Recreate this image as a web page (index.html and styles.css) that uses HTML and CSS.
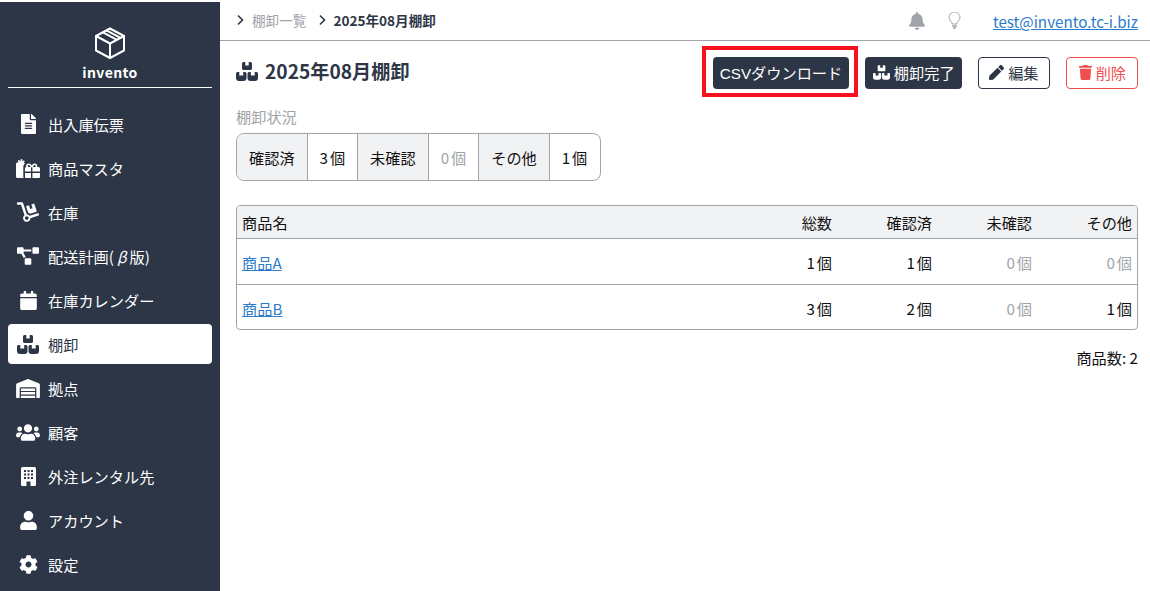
FILE: index.html
```html
<!DOCTYPE html>
<html lang="ja">
<head>
<meta charset="utf-8">
<title>invento</title>
<link rel="stylesheet" href="styles.css">
</head>
<body>
<svg class="defs" aria-hidden="true">
  <symbol id="i-boxes" viewBox="0 0 22 19"><path d="M7.500 0H9.300V3.500H12.700V0H14.500A1.500 1.500 0 0 1 16 1.500V6.500A1.500 1.500 0 0 1 14.500 8H7.500A1.500 1.500 0 0 1 6 6.500V1.500A1.500 1.500 0 0 1 7.500 0Z"/><path d="M1.500 10H3.300V13.500H7.200V10H9A1.500 1.500 0 0 1 10.500 11.500V16A3 3 0 0 1 7.500 19H3A3 3 0 0 1 0 16V11.500A1.500 1.500 0 0 1 1.500 10Z"/><path d="M13 10H14.800V13.500H18.700V10H20.500A1.500 1.500 0 0 1 22 11.500V16A3 3 0 0 1 19 19H14.500A3 3 0 0 1 11.500 16V11.500A1.500 1.500 0 0 1 13 10Z"/></symbol>
</svg>
<div class="app">
  <aside class="side">
    <div class="brand">
      <svg class="logo" viewBox="0 0 32 32" fill="none" stroke="currentColor" stroke-width="2" stroke-linejoin="round" stroke-linecap="round"><path d="M16 1.500 30 9v14.500L16 31 2 23.500V9z"/><path d="M2 9l14 7.500L30 9M16 16.500V31M9 5.300l14 7.500M12.500 3.400l14 7.500"/></svg>
      <div class="brand-name">invento</div>
    </div>
    <nav class="nav">
      <a class="item"><span class="ico"><svg width="15" height="20" viewBox="0 0 384 512"><path d="M224 136V0H24C10.700 0 0 10.700 0 24v464c0 13.300 10.700 24 24 24h336c13.300 0 24-10.700 24-24V160H248c-13.200 0-24-10.800-24-24zm64 236c0 6.600-5.400 12-12 12H108c-6.600 0-12-5.400-12-12v-8c0-6.600 5.400-12 12-12h168c6.600 0 12 5.400 12 12v8zm0-64c0 6.600-5.400 12-12 12H108c-6.600 0-12-5.400-12-12v-8c0-6.600 5.400-12 12-12h168c6.600 0 12 5.400 12 12v8zm0-72v8c0 6.600-5.400 12-12 12H108c-6.600 0-12-5.400-12-12v-8c0-6.600 5.400-12 12-12h168c6.600 0 12 5.400 12 12zm96-114.100v6.100H256V0h6.100c6.400 0 12.500 2.500 17 7l97.900 98c4.500 4.500 7 10.600 7 16.900z"/></svg></span>出入庫伝票</a>
      <a class="item"><span class="ico"><svg width="24" height="20" viewBox="0 0 24 20" fill-rule="evenodd"><path d="M2.500 4.500 1.700 2.500l1.600-.6.900 1.800.7-2.700 1.700.4-.4 2.100 1.700-1.200.9 1.300-1.500 1.200h.5c.6 0 1 .3 1.200.8-1.100.9-1.700 2.100-1.700 3.400V18c0 .7.100 1.400.4 2H1.200C.5 20 0 19.500 0 18.800V6c0-.8.600-1.500 1.400-1.500z"/><path d="M12.800 5.500c1.200 0 2.100.7 2.900 2.100C16.500 6.200 17.400 5.500 18.600 5.500c1.500 0 2.700 1.200 2.700 2.500 0 .4-.1.800-.3 1.100h1.300c.9 0 1.700.7 1.700 1.500v3H16.400V9.300h-1.400v4.300H8.900v-3c0-.8.800-1.500 1.700-1.500h-.3c-.2-.3-.3-.7-.3-1.100 0-1.300 1.200-2.500 2.800-2.500zm0 1.600c-.6 0-1.100.4-1.100.9 0 .6.500 1 1.100 1h1.700c-.7-1.400-1.100-1.900-1.700-1.900zm5.800 0c-.6 0-1 .5-1.700 1.900h1.700c.6 0 1.100-.4 1.100-1 0-.5-.5-.9-1.100-.9z"/><path d="M9 15h6v5h-4.700C9.600 20 9 19.400 9 18.700zM16.400 15H24v3.700c0 .7-.6 1.300-1.300 1.300h-6.300z"/></svg></span>商品マスタ</a>
      <a class="item"><span class="ico"><svg width="22" height="20" viewBox="0 0 576 512"><path d="M294.200 277.700c18 5 34.700 13.400 49.500 24.700l161.500-53.800c8.400-2.800 12.900-11.900 10.100-20.200L454.900 47.200c-2.800-8.400-11.900-12.900-20.200-10.100l-61.100 20.400 33.100 99.400L346 177l-33.100-99.400-61.600 20.500c-8.400 2.800-12.900 11.900-10.100 20.200l53 159.400zm281 48.700L565 296c-2.800-8.400-11.900-12.900-20.200-10.100l-213.500 71.200c-17.200-22-43.600-36.400-73.500-37L158.400 21.900C154 8.800 141.800 0 128 0H16C7.200 0 0 7.200 0 16v32c0 8.800 7.200 16 16 16h88.900l92.200 276.700c-26.100 20.400-41.700 53.600-36 90.500 6.100 39.400 37.900 72.300 77.300 79.200 60.200 10.700 112.300-34.800 113.400-92.600l213.300-71.200c8.300-2.800 12.900-11.800 10.100-20.200zM256 464c-26.500 0-48-21.500-48-48s21.500-48 48-48 48 21.500 48 48-21.500 48-48 48z"/></svg></span>在庫</a>
      <a class="item"><span class="ico"><svg width="22" height="18" viewBox="0 0 640 512"><path d="M384 320H256c-17.670 0-32 14.330-32 32v128c0 17.670 14.330 32 32 32h128c17.670 0 32-14.330 32-32V352c0-17.670-14.330-32-32-32zM192 32c0-17.670-14.330-32-32-32H32C14.330 0 0 14.330 0 32v128c0 17.670 14.330 32 32 32h95.720l73.160 128.040C211.980 300.980 232.400 288 256 288h.28L192 175.510V128h224V64H192V32zM608 0H480c-17.670 0-32 14.330-32 32v128c0 17.670 14.330 32 32 32h128c17.670 0 32-14.330 32-32V32c0-17.670-14.330-32-32-32z"/></svg></span>配送計画(<i class="beta">β</i>版)</a>
      <a class="item"><span class="ico"><svg width="17" height="19" viewBox="0 0 448 512"><path d="M12 192h424c6.600 0 12 5.400 12 12v260c0 26.500-21.500 48-48 48H48c-26.500 0-48-21.500-48-48V204c0-6.600 5.400-12 12-12zm436-44v-36c0-26.500-21.500-48-48-48h-48V12c0-6.600-5.400-12-12-12h-40c-6.600 0-12 5.400-12 12v52H160V12c0-6.600-5.400-12-12-12h-40c-6.600 0-12 5.400-12 12v52H48C21.500 64 0 85.500 0 112v36c0 6.600 5.400 12 12 12h424c6.600 0 12-5.400 12-12z"/></svg></span>在庫カレンダー</a>
      <a class="item active"><span class="ico"><svg width="22" height="19"><use href="#i-boxes"/></svg></span>棚卸</a>
      <a class="item"><span class="ico"><svg width="24" height="19" viewBox="0 0 640 512"><path d="M504 352H136.400c-4.400 0-8 3.600-8 8l-.1 48c0 4.400 3.600 8 8 8H504c4.400 0 8-3.600 8-8v-48c0-4.400-3.600-8-8-8zm0 96H136.100c-4.400 0-8 3.600-8 8l-.1 48c0 4.400 3.600 8 8 8h368c4.400 0 8-3.600 8-8v-48c0-4.400-3.600-8-8-8zm0-192H136.600c-4.400 0-8 3.600-8 8l-.1 48c0 4.400 3.600 8 8 8H504c4.400 0 8-3.600 8-8v-48c0-4.400-3.600-8-8-8zm106.500-139L338.400 3.700a48.150 48.150 0 0 0-36.900 0L29.500 117C11.700 124.500 0 141.900 0 161.300V504c0 4.400 3.600 8 8 8h80c4.400 0 8-3.600 8-8V256c0-17.600 14.600-32 32.600-32h382.800c18 0 32.600 14.400 32.600 32v248c0 4.400 3.600 8 8 8h80c4.400 0 8-3.600 8-8V161.300c0-19.400-11.700-36.800-29.500-44.300z"/></svg></span>拠点</a>
      <a class="item"><span class="ico"><svg width="24" height="19" viewBox="0 0 640 512"><path d="M96 224c35.300 0 64-28.700 64-64s-28.700-64-64-64-64 28.700-64 64 28.700 64 64 64zm448 0c35.300 0 64-28.700 64-64s-28.700-64-64-64-64 28.700-64 64 28.700 64 64 64zm32 32h-64c-17.600 0-33.500 7.100-45.100 18.600 40.300 22.100 68.900 62 75.100 109.400h66c17.700 0 32-14.300 32-32v-32c0-35.300-28.700-64-64-64zm-256 0c61.900 0 112-50.100 112-112S381.900 32 320 32 208 82.100 208 144s50.100 112 112 112zm76.800 32h-8.300c-20.800 10-43.900 16-68.500 16s-47.600-6-68.500-16h-8.300C179.600 288 128 339.600 128 403.200V432c0 26.500 21.500 48 48 48h288c26.500 0 48-21.500 48-48v-28.800c0-63.600-51.600-115.200-115.200-115.200zm-223.700-13.400C161.500 263.100 145.600 256 128 256H64c-35.300 0-64 28.700-64 64v32c0 17.700 14.300 32 32 32h65.900c6.300-47.400 34.900-87.300 75.200-109.400z"/></svg></span>顧客</a>
      <a class="item"><span class="ico"><svg width="15" height="19" viewBox="0 0 15 19" fill-rule="evenodd"><path d="M1.500 0h12A1.500 1.500 0 0 1 15 1.500V17.500A1.500 1.500 0 0 1 13.500 19H9.500v-4.500h-4V19H1.500A1.500 1.500 0 0 1 0 17.500V1.500A1.500 1.500 0 0 1 1.500 0zM3 3v2h2V3zM6.500 3v2h2V3zM10 3v2h2V3zM3 6.500v2h2v-2zM6.500 6.500v2h2v-2zM10 6.500v2h2v-2zM3 10v2h2v-2zM6.500 10v2h2v-2zM10 10v2h2v-2z"/></svg></span>外注レンタル先</a>
      <a class="item"><span class="ico"><svg width="17" height="19" viewBox="0 0 448 512"><path d="M224 256c70.700 0 128-57.300 128-128S294.700 0 224 0 96 57.300 96 128s57.300 128 128 128zm89.600 32h-16.700c-22.200 10.200-46.900 16-72.900 16s-50.600-5.800-72.900-16h-16.700C60.200 288 0 348.200 0 422.400V464c0 26.500 21.500 48 48 48h352c26.500 0 48-21.500 48-48v-41.600c0-74.200-60.200-134.400-134.400-134.400z"/></svg></span>アカウント</a>
      <a class="item"><span class="ico"><svg width="19" height="19" viewBox="0 0 512 512"><path d="M487.400 315.700l-42.600-24.600c4.300-23.200 4.300-47 0-70.200l42.600-24.600c4.900-2.800 7.100-8.600 5.500-14-11.100-35.600-30-67.800-54.700-94.600-3.800-4.100-10-5.100-14.800-2.300L380.800 110c-17.900-15.400-38.500-27.300-60.800-35.100V25.800c0-5.600-3.900-10.500-9.400-11.700-36.700-8.200-74.300-7.800-109.200 0-5.500 1.200-9.400 6.100-9.400 11.700V75c-22.200 7.900-42.800 19.800-60.800 35.100L88.700 85.500c-4.900-2.800-11-1.900-14.800 2.300-24.700 26.700-43.600 58.900-54.700 94.600-1.700 5.400.6 11.200 5.500 14L67.300 221c-4.300 23.200-4.300 47 0 70.200l-42.600 24.600c-4.900 2.800-7.100 8.600-5.500 14 11.100 35.600 30 67.800 54.700 94.600 3.800 4.100 10 5.100 14.800 2.300l42.600-24.600c17.900 15.400 38.500 27.300 60.800 35.100v49.200c0 5.600 3.900 10.500 9.400 11.700 36.700 8.200 74.300 7.800 109.200 0 5.500-1.200 9.400-6.100 9.400-11.700v-49.200c22.200-7.900 42.800-19.800 60.800-35.100l42.600 24.600c4.900 2.800 11 1.900 14.800-2.300 24.700-26.700 43.600-58.900 54.700-94.600 1.500-5.500-.7-11.300-5.600-14.100zM256 336c-44.100 0-80-35.900-80-80s35.900-80 80-80 80 35.900 80 80-35.900 80-80 80z"/></svg></span>設定</a>
    </nav>
  </aside>
  <main class="main">
    <header class="topbar">
      <div class="crumbs">
        <svg class="chev" viewBox="0 0 8 12" fill="none" stroke="currentColor" stroke-width="1.600"><path d="M2 1.500 6.500 6 2 10.500"/></svg>
        <span class="crumb-link">棚卸一覧</span>
        <svg class="chev chev-2" viewBox="0 0 8 12" fill="none" stroke="currentColor" stroke-width="1.600"><path d="M2 1.500 6.500 6 2 10.500"/></svg>
        <span class="crumb-now">2025年08月棚卸</span>
      </div>
      <div class="top-right">
        <svg class="bell" viewBox="0 0 448 512"><path d="M224 512c35.320 0 63.970-28.650 63.970-64H160.030c0 35.350 28.650 64 63.970 64zm215.390-149.710c-19.320-20.760-55.470-51.990-55.470-154.290 0-77.700-54.480-139.900-127.940-155.160V32c0-17.670-14.320-32-31.980-32s-31.980 14.330-31.980 32v20.840C118.560 68.100 64.080 130.300 64.080 208c0 102.300-36.150 133.530-55.470 154.290-6 6.450-8.660 14.160-8.610 21.710.11 16.400 12.980 32 32.100 32h383.800c19.120 0 32-15.600 32.100-32 .05-7.550-2.610-15.270-8.610-21.710z"/></svg>
        <svg class="bulb" viewBox="0 0 13 17" fill="none" stroke="currentColor" stroke-width="1"><path d="M4.300 12C4.300 10 1 8.500 1 5.500a5.500 5.500 0 0 1 11 0C12 8.500 8.700 10 8.700 12z"/><path d="M4.500 14h4M5.500 16h2" stroke-width="1.500" stroke-linecap="round"/></svg>
        <a class="user">test@invento.tc-i.biz</a>
      </div>
    </header>
    <div class="content">
      <div class="head">
        <h1 class="title"><svg class="title-ico"><use href="#i-boxes"/></svg>2025年08月棚卸</h1>
        <div class="actions">
          <button class="btn dark marked">CSVダウンロード</button>
          <button class="btn dark"><svg class="btn-ico"><use href="#i-boxes"/></svg>棚卸完了</button>
          <button class="btn outline"><svg class="btn-ico pen" viewBox="0 0 512 512"><path d="M290.740 93.240l128.020 128.020-277.990 277.990-114.140 12.600C11.350 513.540-1.560 500.620.14 485.340l12.700-114.220 277.900-277.880zm207.200-19.060l-60.110-60.110c-18.750-18.750-49.160-18.750-67.910 0l-56.550 56.550 128.020 128.020 56.550-56.550c18.750-18.760 18.750-49.160 0-67.910z"/></svg>編集</button>
          <button class="btn danger"><svg class="btn-ico trash" viewBox="0 0 448 512"><path d="M432 32H312l-9.400-18.700A24 24 0 0 0 281.100 0H166.800a23.720 23.720 0 0 0-21.400 13.300L136 32H16A16 16 0 0 0 0 48v32a16 16 0 0 0 16 16h416a16 16 0 0 0 16-16V48a16 16 0 0 0-16-16zM53.200 467a48 48 0 0 0 47.900 45h245.800a48 48 0 0 0 47.900-45L416 128H32z"/></svg>削除</button>
        </div>
      </div>
      <div class="status-label">棚卸状況</div>
      <div class="status">
        <span class="s-key">確認済</span><span class="s-val">3 個</span>
        <span class="s-key">未確認</span><span class="s-val muted">0 個</span>
        <span class="s-key">その他</span><span class="s-val">1 個</span>
      </div>
      <div class="table-wrap">
        <table class="table">
          <thead>
            <tr><th class="name">商品名</th><th>総数</th><th>確認済</th><th>未確認</th><th>その他</th></tr>
          </thead>
          <tbody>
            <tr><td class="name"><a>商品A</a></td><td>1 個</td><td>1 個</td><td class="muted">0 個</td><td class="muted">0 個</td></tr>
            <tr><td class="name"><a>商品B</a></td><td>3 個</td><td>2 個</td><td class="muted">0 個</td><td>1 個</td></tr>
          </tbody>
        </table>
      </div>
      <div class="count">商品数: 2</div>
    </div>
  </main>
</div>
</body>
</html>
```
FILE: styles.css
```css
* { box-sizing: border-box; }
html, body { margin: 0; height: 100%; overflow: hidden; }
body {
  font-family: "Noto Sans CJK JP", "Noto Sans", sans-serif;
  font-size: 15.2px;
  color: #111;
  background: #fff;
}
.defs { display: none; }
.app { display: flex; height: 591px; padding-top: 2px; }
.side {
  width: 220px;
  flex: none;
  background: #2d3646;
  color: #fff;
  padding: 0 8px;
}
.brand {
  height: 86px;
  border-bottom: 1px solid #fff;
  display: flex;
  flex-direction: column;
  align-items: center;
  padding-top: 25px;
}
.logo { width: 32px; height: 32px; display: block; }
.brand-name { font-weight: 700; font-size: 14px; line-height: 20px; margin-top: 3px; letter-spacing: .4px; }
.nav { display: flex; flex-direction: column; gap: 4px; margin-top: 16px; }
.item {
  height: 40px;
  display: flex;
  align-items: center;
  border-radius: 4px;
  color: #fff;
}
.item.active { background: #fff; color: #2d3646; }
.ico { width: 40px; display: flex; justify-content: center; align-items: center; flex: none; }
.ico svg { fill: currentColor; display: block; }
.beta { font-style: italic; margin: 0 3px; }
.main { flex: 1; min-width: 0; display: flex; flex-direction: column; margin-top: -2px; }
.topbar {
  height: 41px;
  border-bottom: 1px solid #a0a3a8;
  display: flex;
  justify-content: space-between;
  align-items: center;
  padding: 2px 12px 0 16px;
}
.crumbs { display: flex; align-items: center; font-size: 13.6px; margin-top: -2px; }
.chev { width: 8px; height: 12px; color: #2d3646; margin-right: 8px; }
.chev-2 { margin-left: 12px; margin-right: 7px; }
.crumb-link { color: #a0a3a8; }
.crumb-now { font-weight: 700; color: #2d3646; }
.top-right { display: flex; align-items: center; }
.bell { width: 16px; height: 18px; fill: #a0a3a8; }
.bulb { width: 13px; height: 17px; color: #a0a3a8; margin-left: 23px; margin-top: -2px; }
.user { margin-left: 32px; color: #2b7bc9; text-decoration: underline; }
.content { padding: 16px 12px 0 16px; }
.head { display: flex; justify-content: space-between; align-items: center; height: 32px; }
.title { display: flex; align-items: center; margin: 0 0 4px; font-size: 19.2px; font-weight: 700; color: #2d3646; }
.title-ico { width: 22px; height: 19px; fill: currentColor; margin-right: 7px; }
.actions { display: flex; align-items: center; gap: 16px; }
.marked { position: relative; }
.marked::after {
  content: "";
  position: absolute;
  inset: -12px -10px -9px -12px;
  border: 4px solid #fb1020;
}
.btn {
  height: 32px;
  padding: 0 6.600px 2px;
  border-radius: 4px;
  font: 15.2px "Liberation Sans", "Noto Sans CJK JP", sans-serif;
  display: flex;
  align-items: center;
  border: 1px solid transparent;
}
.marked.btn { padding: 0 6px 2px; }
.dark { background: #2d3646; color: #fff; }
.outline { background: #fff; border-color: #2d3646; color: #2d3646; padding: 0 10.500px 2px 10px; }
.danger { background: #fff; border-color: #ef4f4f; color: #ef4f4f; padding: 0 11px 2px 11.600px; }
.btn-ico { width: 17px; height: 15px; fill: currentColor; margin-right: 4px; flex: none; }
.pen { width: 15px; }
.trash { width: 13px; }
.status-label { margin-top: 16px; color: #a0a3a8; line-height: 22px; }
.status {
  display: inline-flex;
  margin-top: 6px;
  height: 48px;
  border: 1px solid #a0a3a8;
  border-radius: 8px;
  overflow: hidden;
}
.s-key, .s-val {
  display: flex;
  align-items: center;
  padding: 0 12px;
  border-right: 1px solid #a0a3a8;
}
.s-val { word-spacing: -1.500px; white-space: pre; }
.s-key { background: #f1f2f4; }
.s-val:last-child { border-right: 0; padding-right: 13px; }
.muted { color: #a0a3a8; }
.table-wrap { margin-top: 24px; border: 1px solid #a0a3a8; border-radius: 4px; overflow: hidden; }
.table { width: 100%; border-collapse: collapse; table-layout: fixed; }
.table th, .table td { text-align: right; padding: 0 5px; font-weight: 400; width: 100px; word-spacing: -1.500px; }
.table th { height: 32px; background: #f1f2f4; }
.table td { height: 46px; padding-top: 2px; border-top: 1px solid #a0a3a8; }
.table tbody tr:last-child td { height: 45px; }
.table .name { text-align: left; width: auto; }
.table a { color: #2b7bc9; text-decoration: underline; }
.count { text-align: right; margin-top: 16px; line-height: 22px; }
```
